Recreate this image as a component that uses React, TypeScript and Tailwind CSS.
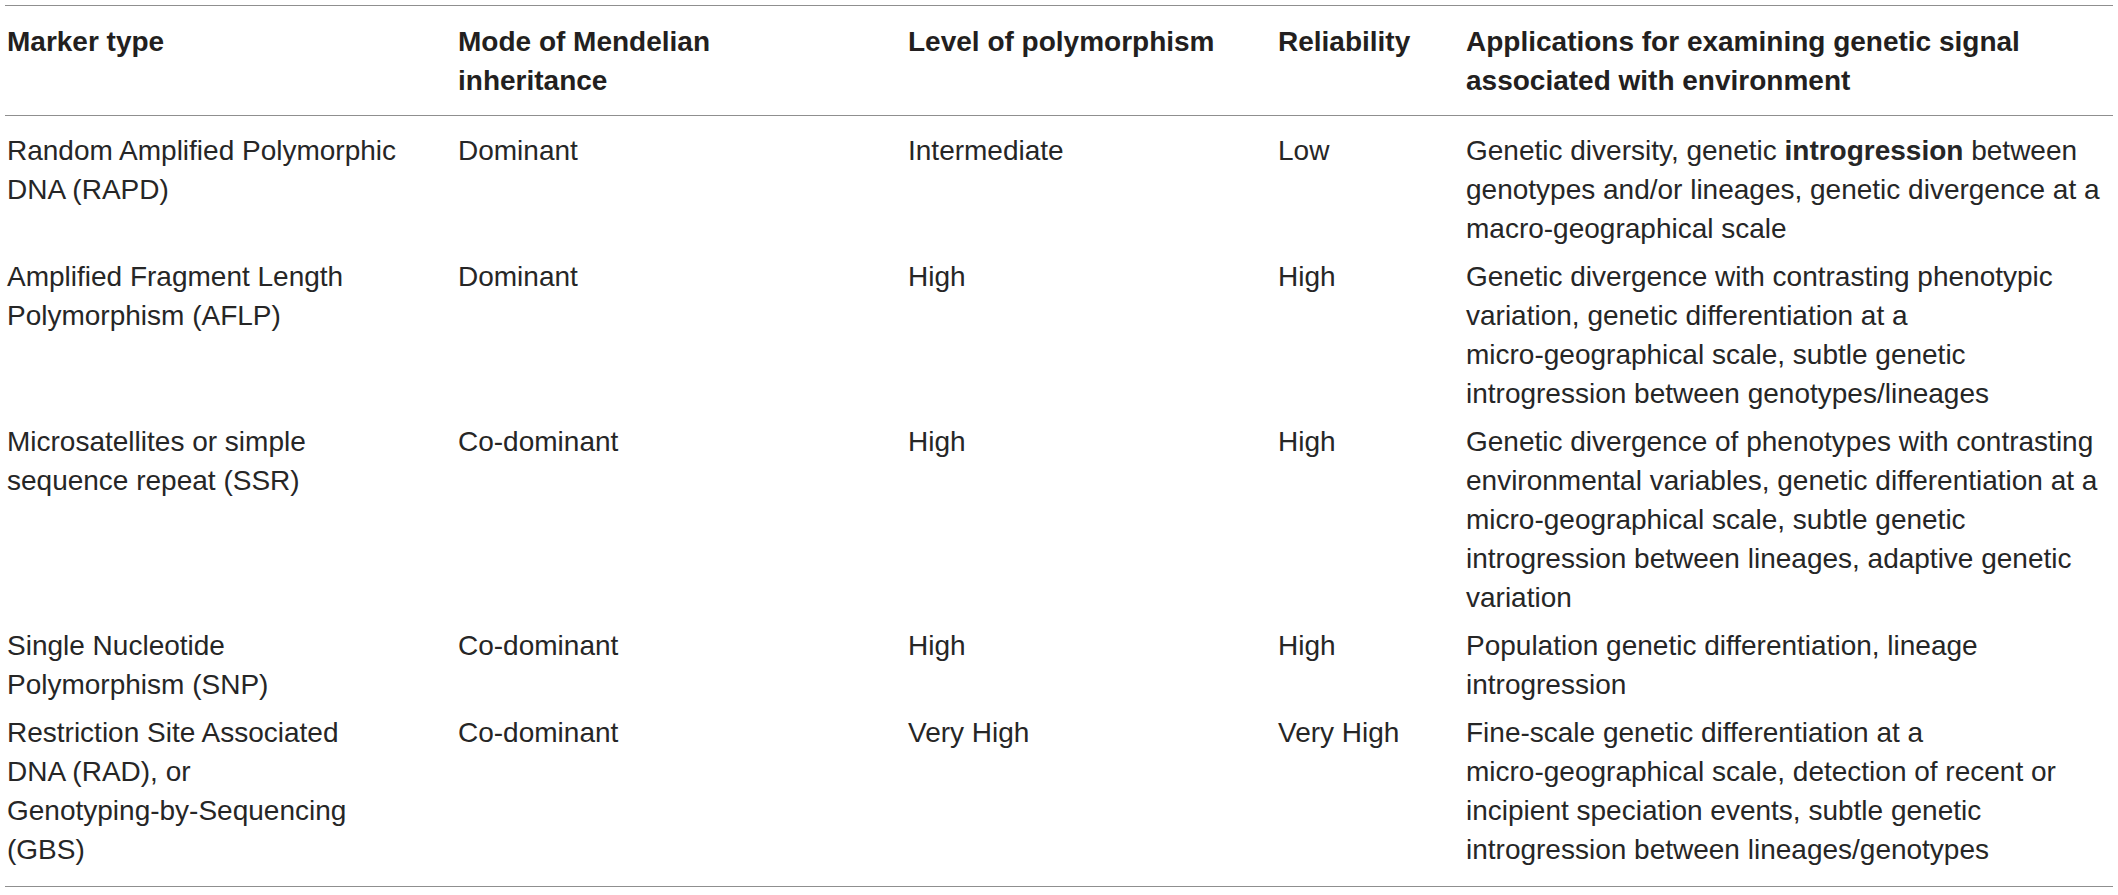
import type { ReactNode } from "react";

interface MarkerRow {
  marker: string;
  mode: string;
  level: string;
  reliability: string;
  applications: ReactNode;
}

// keep hyphenated words together, the source table never breaks on "-"
const keep = (text: string) =>
  text.split(/(\S*-\S*)/).map((part, i) =>
    part.includes("-") ? (
      <span key={i} className="whitespace-nowrap">
        {part}
      </span>
    ) : (
      part
    )
  );

const rows: MarkerRow[] = [
  {
    marker: "Random Amplified Polymorphic DNA (RAPD)",
    mode: "Dominant",
    level: "Intermediate",
    reliability: "Low",
    applications: (
      <>
        Genetic diversity, genetic <strong className="font-bold">introgression</strong> between
        genotypes and/or lineages, genetic divergence at a{" "}
        <span className="whitespace-nowrap">macro-geographical</span> scale
      </>
    ),
  },
  {
    marker: "Amplified Fragment Length Polymorphism (AFLP)",
    mode: "Dominant",
    level: "High",
    reliability: "High",
    applications: keep(
      "Genetic divergence with contrasting phenotypic variation, genetic differentiation at a micro-geographical scale, subtle genetic introgression between genotypes/lineages"
    ),
  },
  {
    marker: "Microsatellites or simple sequence repeat (SSR)",
    mode: "Co-dominant",
    level: "High",
    reliability: "High",
    applications: keep(
      "Genetic divergence of phenotypes with contrasting environmental variables, genetic differentiation at a micro-geographical scale, subtle genetic introgression between lineages, adaptive genetic variation"
    ),
  },
  {
    marker: "Single Nucleotide Polymorphism (SNP)",
    mode: "Co-dominant",
    level: "High",
    reliability: "High",
    applications: "Population genetic differentiation, lineage introgression",
  },
  {
    marker: "Restriction Site Associated DNA (RAD), or Genotyping-by-Sequencing (GBS)",
    mode: "Co-dominant",
    level: "Very High",
    reliability: "Very High",
    applications: keep(
      "Fine-scale genetic differentiation at a micro-geographical scale, detection of recent or incipient speciation events, subtle genetic introgression between lineages/genotypes"
    ),
  },
];

const grid = "grid grid-cols-[451px_450px_370px_188px_1fr] pl-[2px]";

export default function App() {
  return (
    <div className="min-h-screen bg-white px-[5px] pt-[5px] font-['Liberation_Sans',Arial,sans-serif] text-[28px] leading-[39px] text-[#262626]">
      <div className="border-t-[1.5px] border-b-[1.5px] border-[#8f8f8f]">
        {/* header */}
        <div className={`${grid} border-b-[1.5px] border-[#8f8f8f] pt-[16px] pb-[15px] font-bold text-[#231f20]`}>
          <div className="pr-[54px]">Marker type</div>
          <div className="pr-[60px]">Mode of Mendelian inheritance</div>
          <div className="pr-[20px]">Level of polymorphism</div>
          <div className="pr-[10px]">Reliability</div>
          <div>Applications for examining genetic signal associated with environment</div>
        </div>

        <div className="pt-[6px] pb-[17px]">
          {rows.map((row) => (
            <div key={row.marker} className={`${grid} pt-[9px]`}>
              <div className="pr-[55px]">{keep(row.marker)}</div>
              <div className="pr-[60px]">{keep(row.mode)}</div>
              <div className="pr-[20px]">{row.level}</div>
              <div className="pr-[10px]">{row.reliability}</div>
              <div>{row.applications}</div>
            </div>
          ))}
        </div>
      </div>
    </div>
  );
}
